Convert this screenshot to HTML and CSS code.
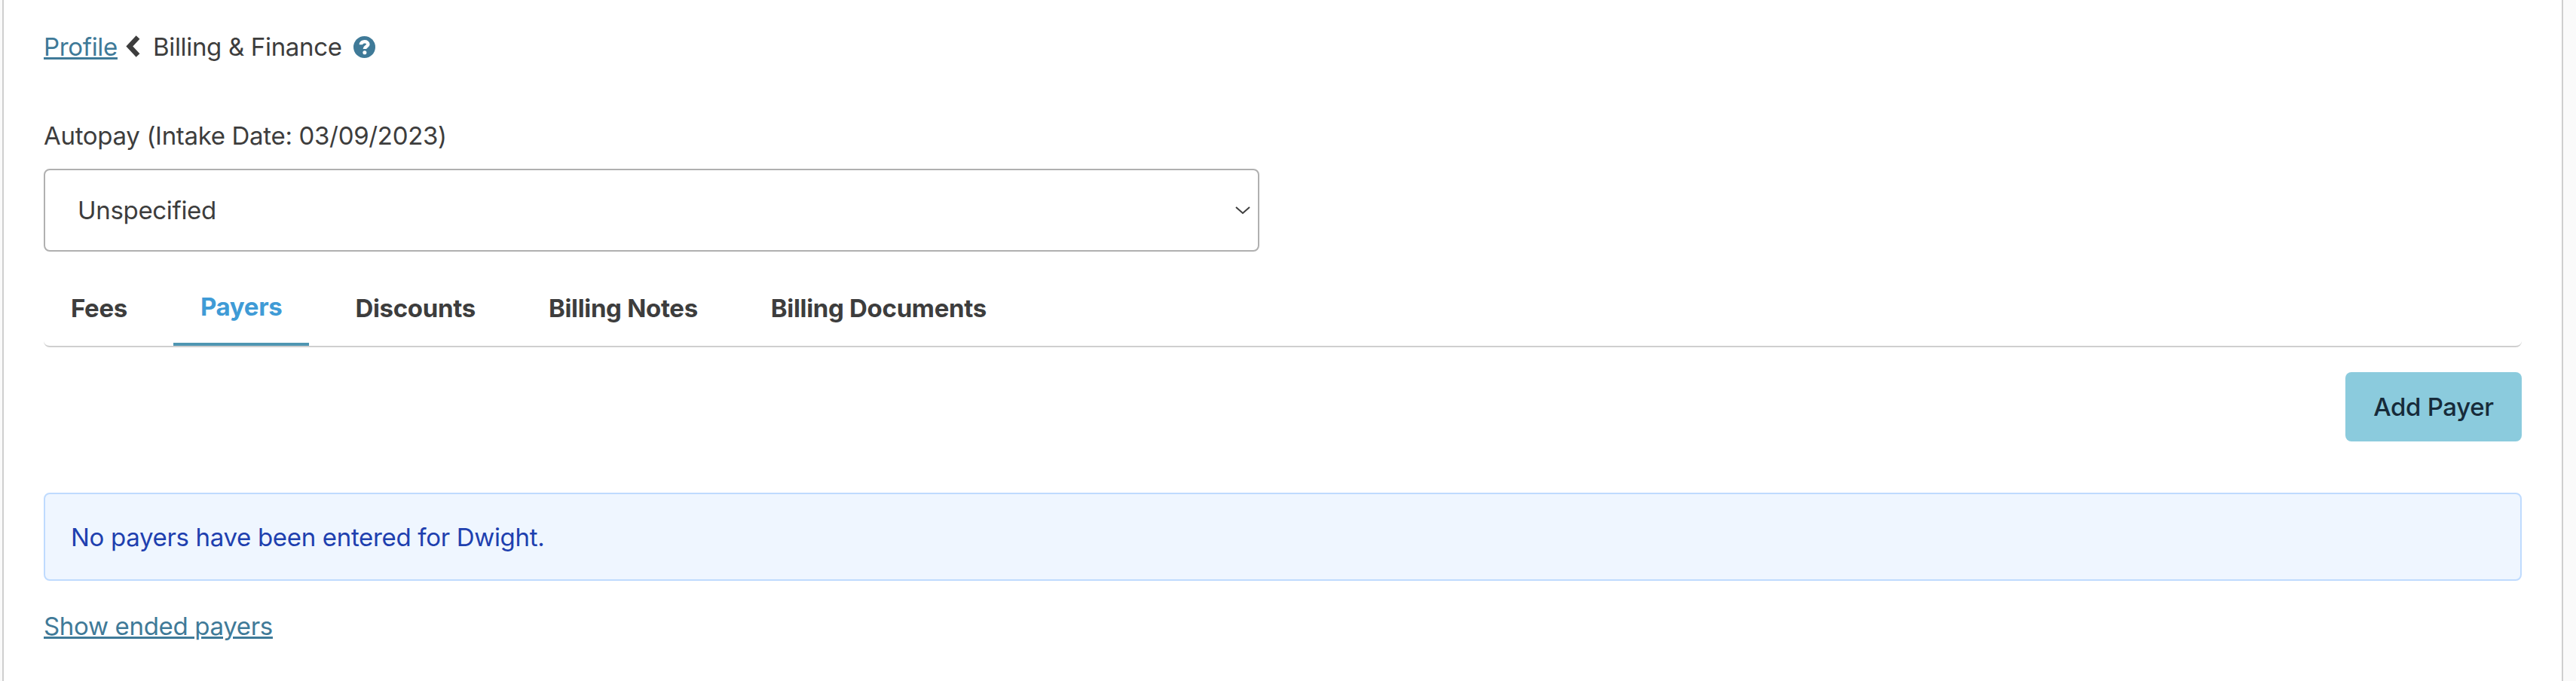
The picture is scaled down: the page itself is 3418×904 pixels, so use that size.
FILE: index.html
```html
<!DOCTYPE html>
<html>
<head>
    <link rel="stylesheet" href="styles.css">
</head>
<body>
    <div class="panel">
        <div class="breadcrumb">
            <a class="link" href="#">Profile</a>
            <svg class="crumb-arrow" viewBox="0 0 19 29"><path d="M16 2.5 L4.8 14.5 L16 26.5" /></svg>
            <span class="crumb-title">Billing &amp; Finance</span>
            <svg class="help-icon" viewBox="0 0 32 32">
                <circle cx="16" cy="16" r="16" />
                <path class="help-mark" d="M11 12.5 C11 9.5 13.2 8 16.2 8 C19.2 8 21.4 9.6 21.4 12 C21.4 15 16.4 15.2 16.4 18.8" />
                <circle class="help-dot" cx="16.4" cy="24" r="2.8" />
            </svg>
        </div>

        <label class="field-label">Autopay (Intake Date: 03/09/2023)</label>
        <div class="select-box">
            <span>Unspecified</span>
            <svg class="select-arrow" viewBox="0 0 20 12"><path d="M1 2 L10 10 L19 2" /></svg>
        </div>

        <div class="tabs">
            <div class="tab">Fees</div>
            <div class="tab active">Payers</div>
            <div class="tab">Discounts</div>
            <div class="tab">Billing Notes</div>
            <div class="tab">Billing Documents</div>
        </div>

        <div class="actions">
            <button class="add-btn">Add Payer</button>
        </div>

        <div class="alert">No payers have been entered for Dwight.</div>

        <a class="link show-ended" href="#">Show ended payers</a>
    </div>
</body>
</html>
```

FILE: styles.css
```css
:root {
    --text-color: #3d3d3d;
    --link-color: #3f7a98;
    --border-color: #cfcfcf;
    --select-border: #b0b0b0;
    --tab-active: #3f9bd6;
    --tab-line: #4f96b2;
    --btn-bg: #8bcbdd;
    --btn-text: #172b3a;
    --alert-bg: #eff6ff;
    --alert-border: #bfdbfe;
    --alert-text: #1e40af;
}

html, body {
    margin: 0;
    height: 100%;
}

body {
    background: #fafafa;
    font-family: Inter, "Liberation Sans", sans-serif;
    font-size: 33px;
    letter-spacing: -0.32px;
    color: var(--text-color);
    overflow: hidden;
}

.panel {
    box-sizing: border-box;
    width: 3398px;
    height: 904px;
    margin-left: 3px;
    padding: 36px 53px 0 53px;
    background: #fff;
    border-left: 2px solid var(--border-color);
    border-right: 2px solid var(--border-color);
}

.link {
    color: var(--link-color);
    text-decoration: underline;
}

.breadcrumb {
    display: flex;
    align-items: center;
    height: 52px;
}

.crumb-arrow {
    width: 19px;
    height: 29px;
    margin: -2px 17px 0 11px;
}

.crumb-arrow path {
    fill: none;
    stroke: var(--text-color);
    stroke-width: 6.5;
}

.help-icon {
    width: 29px;
    height: 29px;
    margin-left: 15px;
    fill: var(--link-color);
}

.help-mark {
    fill: none;
    stroke: #fff;
    stroke-width: 5;
}

.help-dot {
    fill: #fff;
}

.field-label {
    display: block;
    margin-top: 72px;
    line-height: 40px;
}

.select-box {
    display: flex;
    align-items: center;
    justify-content: space-between;
    box-sizing: border-box;
    width: 1613px;
    height: 110px;
    margin-top: 24px;
    padding: 0 10px 0 43px;
    border: 2px solid var(--select-border);
    border-radius: 8px;
}

.select-arrow {
    width: 20px;
    height: 12px;
}

.select-arrow path {
    fill: none;
    stroke: var(--text-color);
    stroke-width: 2;
}

.tabs {
    display: flex;
    gap: 25px;
    height: 127px;
    box-sizing: border-box;
    border-bottom: 2px solid var(--border-color);
    border-radius: 0 0 8px 8px;
}

.tab {
    display: flex;
    align-items: center;
    padding: 25px 36px 0;
    font-weight: 700;
}

.tab.active {
    color: var(--tab-active);
    border-bottom: 4px solid var(--tab-line);
}

.actions {
    display: flex;
    justify-content: flex-end;
    margin-top: 33px;
}

.add-btn {
    height: 92px;
    width: 234px;
    padding: 0;
    border: none;
    border-radius: 8px;
    background: var(--btn-bg);
    color: var(--btn-text);
    font-family: inherit;
    font-size: 33px;
    font-weight: 500;
    letter-spacing: -0.32px;
}

.alert {
    display: flex;
    align-items: center;
    box-sizing: border-box;
    height: 117px;
    margin-top: 68px;
    padding-left: 34px;
    background: var(--alert-bg);
    border: 2px solid var(--alert-border);
    border-radius: 8px;
    color: var(--alert-text);
}

.show-ended {
    display: inline-block;
    margin-top: 40px;
    line-height: 40px;
}
```
